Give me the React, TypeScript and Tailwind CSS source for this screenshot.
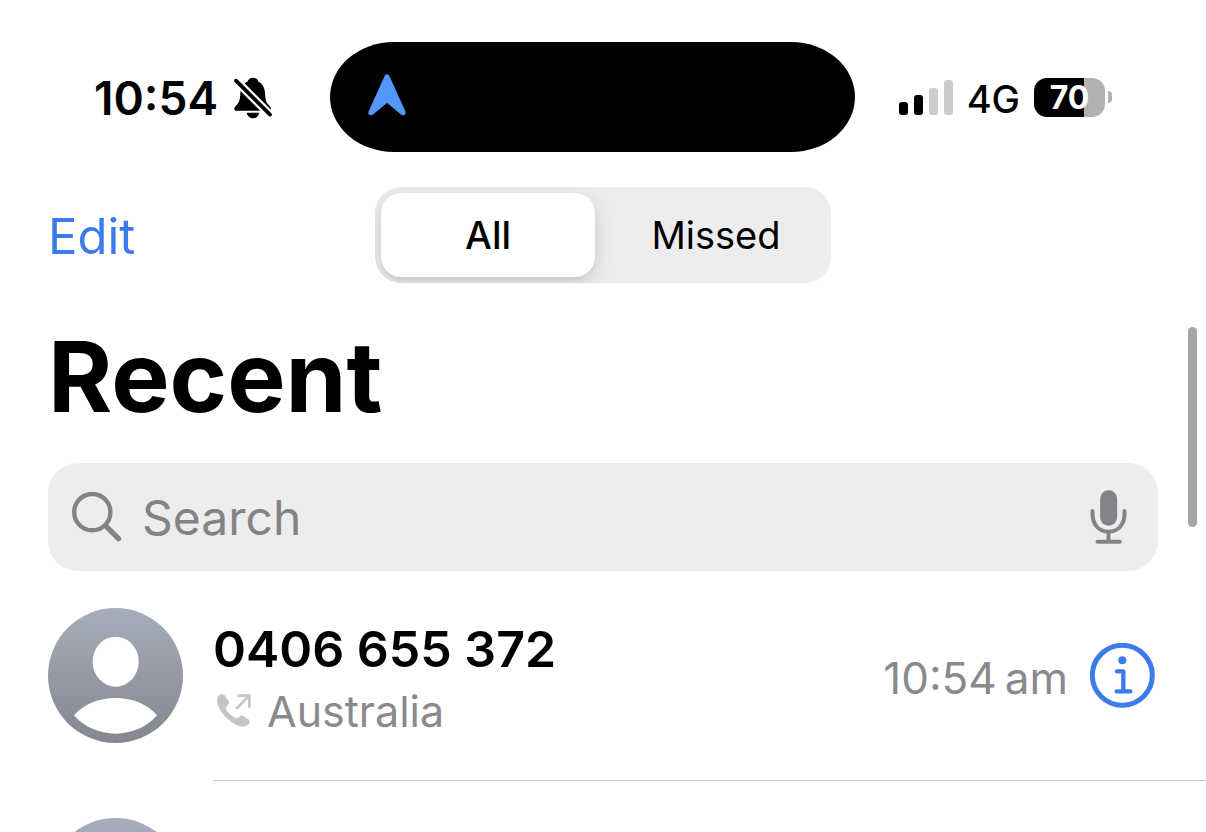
const signalBars = [
  { id: 1, className: 'h-[13px] bg-black' },
  { id: 2, className: 'h-[20px] bg-black' },
  { id: 3, className: 'h-[27px] bg-[#cccccc]' },
  { id: 4, className: 'h-[35px] bg-[#cccccc]' },
];

function BellOffIcon() {
  return (
    <svg viewBox="0 0 114 126" className="h-[42px] w-[38px]" aria-hidden="true">
      <path
        d="M57 2c-9 0-15 5-17 12C27 20 20 32 19 48c-1 22-3 28-13 38-4 4-5 6-5 9 0 4 3 6 7 6h96c4 0 7-2 7-6 0-3-1-5-5-9-10-10-12-16-13-38-1-16-7-28-20-34C72 7 66 2 57 2z"
        fill="black"
      />
      <path d="M38 107h38c-2 10-10 17-19 17s-17-7-19-17z" fill="black" />
      <path d="M-4 1l124 124" stroke="white" strokeWidth="25" />
      <path d="M6 11l102 102" stroke="black" strokeWidth="11" strokeLinecap="round" />
    </svg>
  );
}

function LocationArrow() {
  return (
    <svg viewBox="0 0 114 126" className="h-[42px] w-[38px]" aria-hidden="true">
      <path
        d="M57 9L9 116l48-40 48 40z"
        fill="#5298f8"
        stroke="#5298f8"
        strokeWidth="16"
        strokeLinejoin="round"
      />
    </svg>
  );
}

function SearchIcon() {
  return (
    <svg viewBox="0 0 148 149" className="h-[50px] w-[50px] shrink-0" fill="none" stroke="#838387" aria-hidden="true">
      <circle cx="60" cy="60" r="54" strokeWidth="13" />
      <path d="M100 101l38 38" strokeWidth="16" strokeLinecap="round" />
    </svg>
  );
}

function MicIcon() {
  return (
    <svg viewBox="0 0 110 162" className="h-[54px] w-[37px]" fill="none" stroke="#838387" strokeWidth="12" strokeLinecap="round" aria-hidden="true">
      <rect x="30" y="1" width="51" height="106" rx="25" fill="#838387" stroke="none" />
      <path d="M7 63v9c0 31 19 53 48 53s48-22 48-53v-9M55 126v28M22 155h67" />
    </svg>
  );
}

function OutgoingCallIcon() {
  return (
    <svg viewBox="0 0 102 102" className="h-[34px] w-[34px]" aria-hidden="true">
      <path
        d="M12 1C5 3 0 10 0 20c2 33 45 75 77 78 11 0 17-5 20-11 2-4 0-8-3-11L79 66c-4-3-8-2-12 2l-5 4c-2 2-5 2-8 0-10-6-21-17-26-25-2-3-2-6 0-8l5-6c3-3 4-7 2-11L24 5c-3-4-8-5-12-4z"
        fill="#c5c5c7"
      />
      <path d="M60 42L96 6M65 5h32v33" fill="none" stroke="#c5c5c7" strokeWidth="8" strokeLinecap="round" />
    </svg>
  );
}

function InfoIcon() {
  return (
    <svg viewBox="0 0 195 195" className="h-[65px] w-[65px]" fill="none" stroke="#3b7bea" aria-hidden="true">
      <circle cx="97" cy="97" r="90" strokeWidth="15" />
      <circle cx="97" cy="52" r="12" fill="#3b7bea" stroke="none" />
      <path d="M81 85h19v60M80 145h41" strokeWidth="13" strokeLinecap="round" strokeLinejoin="round" />
    </svg>
  );
}

function Avatar() {
  return (
    <div className="size-[135px] shrink-0 overflow-hidden rounded-full bg-linear-to-b from-[#a7adbb] to-[#84878f]">
      <svg viewBox="0 0 405 405" className="size-full" fill="white" aria-hidden="true">
        <ellipse cx="203" cy="161" rx="69" ry="75" />
        <path d="M78 322c28-33 74-52 125-52s96 19 124 52c-30 35-75 55-124 55S108 357 78 322z" />
      </svg>
    </div>
  );
}

function StatusBar() {
  return (
    <header className="flex items-center px-[94px] pt-[42px]">
      <div className="flex w-[236px] shrink-0 items-center gap-4 pt-0.5">
        <span className="text-[46px] leading-none font-semibold">10:54</span>
        <BellOffIcon />
      </div>
      <div className="flex h-[110px] flex-1 items-center rounded-[64px/55px] bg-black px-[38px] pb-1">
        <LocationArrow />
      </div>
      <div className="flex w-[257px] shrink-0 items-center justify-end gap-3.5">
        <div className="flex items-end gap-1.5">
          {signalBars.map((bar) => (
            <span key={bar.id} className={`w-[9px] rounded-[3px] ${bar.className}`} />
          ))}
        </div>
        <span className="pt-1 text-[38px] leading-none font-medium">4G</span>
        <div className="flex items-center gap-[3px]">
          <div className="flex h-[39px] w-[71px] items-center justify-center rounded-[13px] bg-linear-to-r from-black from-70% to-[#b1b1b1] to-70% pt-0.5 text-[32px] leading-none font-bold text-white">
            70
          </div>
          <span className="h-[12px] w-[4px] rounded-r-full bg-[#b1b1b1]" />
        </div>
      </div>
    </header>
  );
}

function NavBar() {
  return (
    <nav className="mt-[35px] grid grid-cols-[1fr_456px_1fr] items-center px-12">
      <button type="button" className="justify-self-start pt-0.5 text-[49px] leading-none text-[#3b7bea]">
        Edit
      </button>
      <div className="grid h-[96px] grid-cols-2 gap-4 overflow-hidden rounded-[26px] bg-[#ededee] p-1.5 text-[38px] leading-none">
        <button type="button" aria-pressed="true" className="rounded-[20px] bg-white font-medium shadow-[0_6px_20px_rgba(0,0,0,0.14),0_3px_3px_rgba(0,0,0,0.05)]">
          All
        </button>
        <button type="button" aria-pressed="false" className="pr-1">
          Missed
        </button>
      </div>
    </nav>
  );
}

export default function App() {
  return (
    <div className="h-screen overflow-hidden bg-white font-['Inter',sans-serif] text-black">
      <StatusBar />
      <NavBar />
      <main className="relative pt-[44px]">
        {/* Scroll indicator */}
        <div className="absolute top-[44px] right-[9px] h-[200px] w-[9px] rounded-full bg-[#a5a5a5]" />

        <h1 className="px-12 text-[98px] leading-[100px] font-bold">Recent</h1>

        <div className="mx-12 mt-9 flex h-[108px] items-center rounded-[30px] bg-[#ededee] px-6">
          <SearchIcon />
          <input
            type="text"
            aria-label="Search"
            placeholder="Search"
            className="ml-5 min-w-0 flex-1 bg-transparent pt-0.5 text-[48px] leading-[60px] outline-none placeholder:text-[#838387]"
          />
          <button type="button" aria-label="Dictate" className="mr-[7px]">
            <MicIcon />
          </button>
        </div>

        <ul>
          <li className="flex gap-[30px] pl-12">
            <div className="pt-[37px] pb-[38px]">
              <Avatar />
            </div>
            <div className="flex flex-1 items-center border-b border-[#c4c4c6] pr-[51px]">
              <div className="flex-1 pt-2">
                <p className="text-[50px] leading-[62px] font-semibold">0406 655 372</p>
                <div className="flex items-center gap-4 pl-1">
                  <OutgoingCallIcon />
                  <span className="text-[43px] leading-[62px] text-[#8a8a8d]">Australia</span>
                </div>
              </div>
              <time className="mr-[22px] pt-1 text-[44px] leading-none text-[#8a8a8d]">10:54{'\u202f'}am</time>
              <button type="button" aria-label="Call details">
                <InfoIcon />
              </button>
            </div>
          </li>
          <li className="py-[37px] pl-12">
            <Avatar />
          </li>
        </ul>
      </main>
    </div>
  );
}
